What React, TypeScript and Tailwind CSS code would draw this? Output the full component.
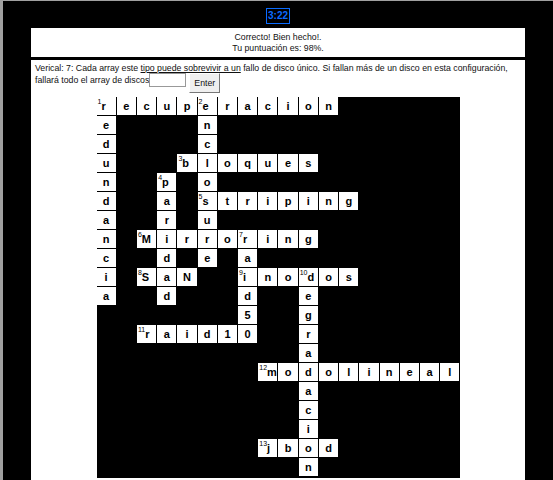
import React from "react";

type Cell = { ch: string; num?: number };

const ROWS = 20;
const COLS = 18;

// [row, col, word, number]
const across: [number, number, string, number][] = [
  [0, 0, "recuperacion", 1],
  [3, 4, "bloques", 3],
  [5, 5, "striping", 5],
  [7, 2, "Mirroring", 6],
  [9, 2, "SaN", 8],
  [9, 7, "inodos", 9],
  [12, 2, "raid10", 11],
  [14, 8, "modolineal", 12],
  [18, 8, "jbod", 13],
];

const down: [number, number, string, number][] = [
  [0, 0, "redundancia", 1],
  [0, 5, "enclosure", 2],
  [4, 3, "paridad", 4],
  [7, 7, "raid50", 7],
  [9, 10, "degradacion", 10],
];

function buildGrid() {
  const grid: (Cell | null)[][] = Array.from({ length: ROWS }, () =>
    Array.from({ length: COLS }, () => null)
  );
  across.forEach(([r, c, w, n]) => {
    w.split("").forEach((ch, i) => {
      grid[r][c + i] = { ch, num: grid[r][c + i]?.num };
    });
    grid[r][c] = { ch: w[0], num: n };
  });
  down.forEach(([r, c, w, n]) => {
    w.split("").forEach((ch, i) => {
      const prev = grid[r + i][c];
      grid[r + i][c] = { ch, num: prev?.num };
    });
    grid[r][c] = { ch: w[0], num: n };
  });
  return grid;
}

function CrossCell({ cell }: { cell: Cell | null }) {
  if (!cell) return <div />;
  if (cell.num) {
    return (
      <div className="bg-white flex items-center pl-[1px] text-[11px] font-bold text-black">
        <span className="self-start text-[7px] leading-[9px] font-normal">{cell.num}</span>
        <span>{cell.ch}</span>
      </div>
    );
  }
  return (
    <div className="bg-white flex items-center justify-center text-[11px] font-bold text-black">
      {cell.ch}
    </div>
  );
}

export default function App() {
  const grid = buildGrid();
  return (
    <div
      className="h-[480px] w-[553px] overflow-hidden bg-black border-l-[3px] border-t border-[#a0a0a0] text-black"
      style={{ fontFamily: '"Liberation Sans", Arial, sans-serif' }}
    >
      <div className="flex justify-center pt-[7px]">
        <span className="border border-[#0a6cff] text-[#0a6cff] text-[10px] font-bold leading-[14px] px-[1px]">
          3:22
        </span>
      </div>

      <div className="mx-[28px] mt-[4px] bg-white h-[29px] flex flex-col justify-center text-center text-[8.75px] leading-[11px] text-[#111]">
        <p>Correcto! Bien hecho!.</p>
        <p>Tu puntuación es: 98%.</p>
      </div>

      <div className="mx-[28px] mt-[3px] bg-white h-[440px] px-[4px] pt-[2px]">
        <div className="text-[8.75px] leading-[12px] text-[#111]">
          Verical: 7: Cada array este <span className="underline">tipo puede sobrevivir a un</span> fallo de disco único.
          Si fallan más de un disco en esta configuración,
          <br />
          fallará todo el array de discos
          <input
            className="inline-block align-baseline w-[37px] h-[14px] -my-[4px] border border-[#999] bg-white"
            type="text"
          />
          <button className="ml-[3px] align-[-3px] h-[20px] -my-[6px] px-[4px] text-[8.75px] bg-[#efefef] border border-t-[#fff] border-l-[#fff] border-r-[#777] border-b-[#777]">
            Enter
          </button>
        </div>

        <div className="mt-[10px] flex justify-center">
          <div className="w-[363px] bg-black grid grid-cols-[repeat(18,1fr)] auto-rows-[18px] gap-[1px] pb-[2px]">
            {grid.map((row, r) =>
              row.map((cell, c) => <CrossCell key={`${r}-${c}`} cell={cell} />)
            )}
          </div>
        </div>
      </div>
    </div>
  );
}
